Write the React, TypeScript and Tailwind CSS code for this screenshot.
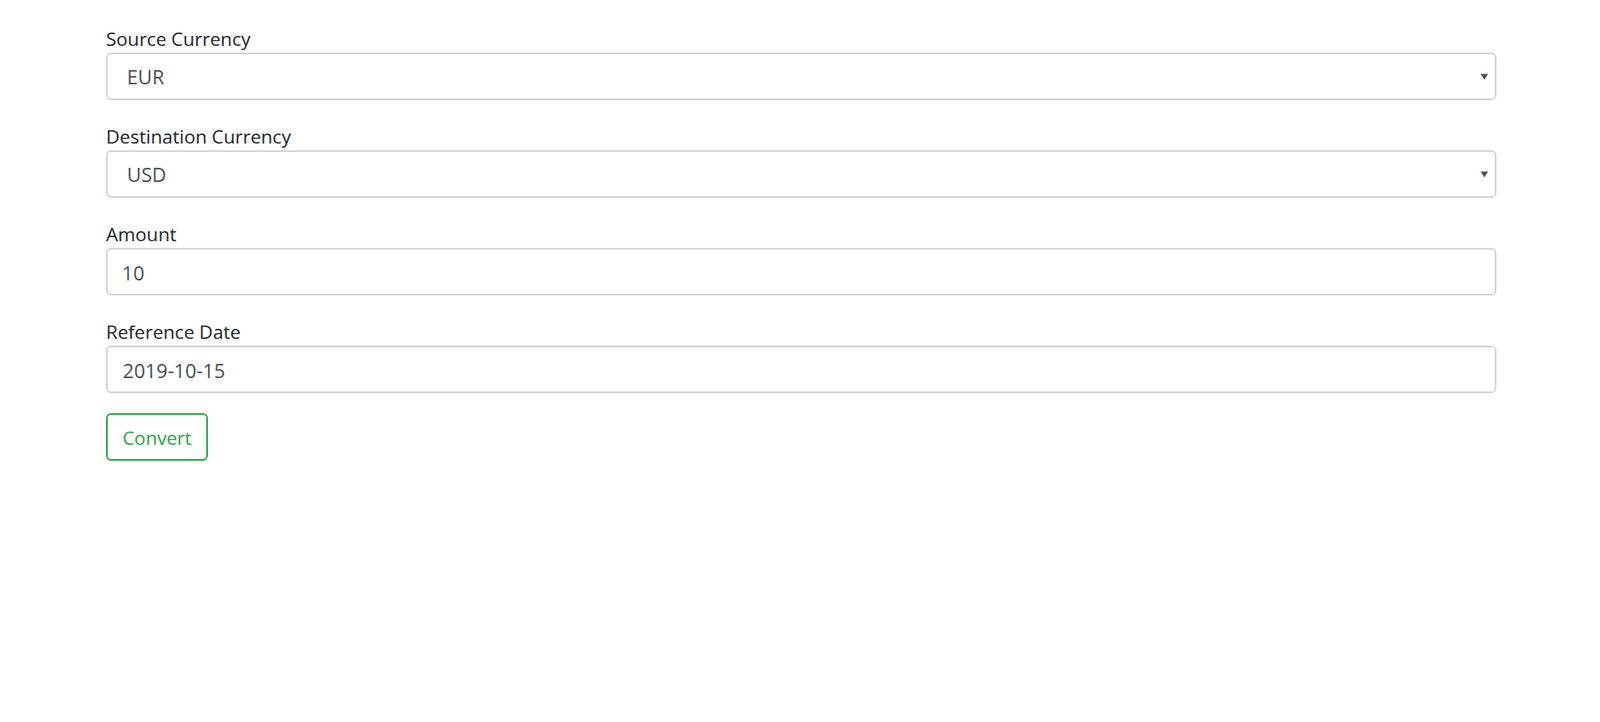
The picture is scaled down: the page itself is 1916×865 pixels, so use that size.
import { useState } from 'react'

const font = { fontFamily: '"Open Sans", "Noto Sans", sans-serif' }

function Caret() {
  return (
    <svg
      className="pointer-events-none absolute right-[10px] top-1/2 -translate-y-1/2"
      width="9"
      height="8"
      viewBox="0 0 9 8"
      aria-hidden="true"
    >
      <path d="M0 0.5 H9 L4.5 7.5 Z" fill="#495057" />
    </svg>
  )
}

function Field({ label, children }: { label: string; children: React.ReactNode }) {
  return (
    <div className="mb-[27px]">
      <label className="block text-[22.5px] leading-[33px] text-[#212529]">{label}</label>
      {children}
    </div>
  )
}

export default function App() {
  const [source, setSource] = useState('EUR')
  const [dest, setDest] = useState('USD')
  const [amount, setAmount] = useState('10')
  const [date, setDate] = useState('2019-10-15')

  const currencies = ['EUR', 'USD', 'GBP', 'JPY', 'CHF']

  return (
    <div className="min-h-screen bg-white" style={font}>
      <form className="pl-[127px] pr-[124px] pt-[30px]" onSubmit={(e) => e.preventDefault()}>
        <Field label="Source Currency">
          <div className="relative">
            <select
              value={source}
              onChange={(e) => setSource(e.target.value)}
              className="block h-[57px] w-full appearance-none rounded-[6px] border-2 border-[#ced4da] bg-white pl-[23px] pr-8 pt-[3px] text-[23.5px] text-[#495057] outline-none"
              style={font}
            >
              {currencies.map((c) => (
                <option key={c}>{c}</option>
              ))}
            </select>
            <Caret />
          </div>
        </Field>

        <Field label="Destination Currency">
          <div className="relative">
            <select
              value={dest}
              onChange={(e) => setDest(e.target.value)}
              className="block h-[57px] w-full appearance-none rounded-[6px] border-2 border-[#ced4da] bg-white pl-[23px] pr-8 pt-[3px] text-[23.5px] text-[#495057] outline-none"
              style={font}
            >
              {currencies.map((c) => (
                <option key={c}>{c}</option>
              ))}
            </select>
            <Caret />
          </div>
        </Field>

        <Field label="Amount">
          <input
            type="text"
            value={amount}
            onChange={(e) => setAmount(e.target.value)}
            className="block h-[57px] w-full rounded-[6px] border-2 border-[#ced4da] bg-white pl-[17px] pt-[2px] text-[23.5px] text-[#495057] outline-none"
            style={font}
          />
        </Field>

        <div className="mb-[24px]">
          <label className="block text-[22.5px] leading-[33px] text-[#212529]">Reference Date</label>
          <input
            type="text"
            value={date}
            onChange={(e) => setDate(e.target.value)}
            className="block h-[57px] w-full rounded-[6px] border-2 border-[#ced4da] bg-white pl-[18px] pt-[2px] text-[23.5px] text-[#495057] outline-none"
            style={font}
          />
        </div>

        <button
          type="submit"
          className="flex h-[57px] w-[122px] items-center justify-center rounded-[6px] border-2 border-[#28a745] bg-white pt-[2px] text-[22.5px] text-[#28a745]"
          style={font}
        >
          Convert
        </button>
      </form>
    </div>
  )
}
